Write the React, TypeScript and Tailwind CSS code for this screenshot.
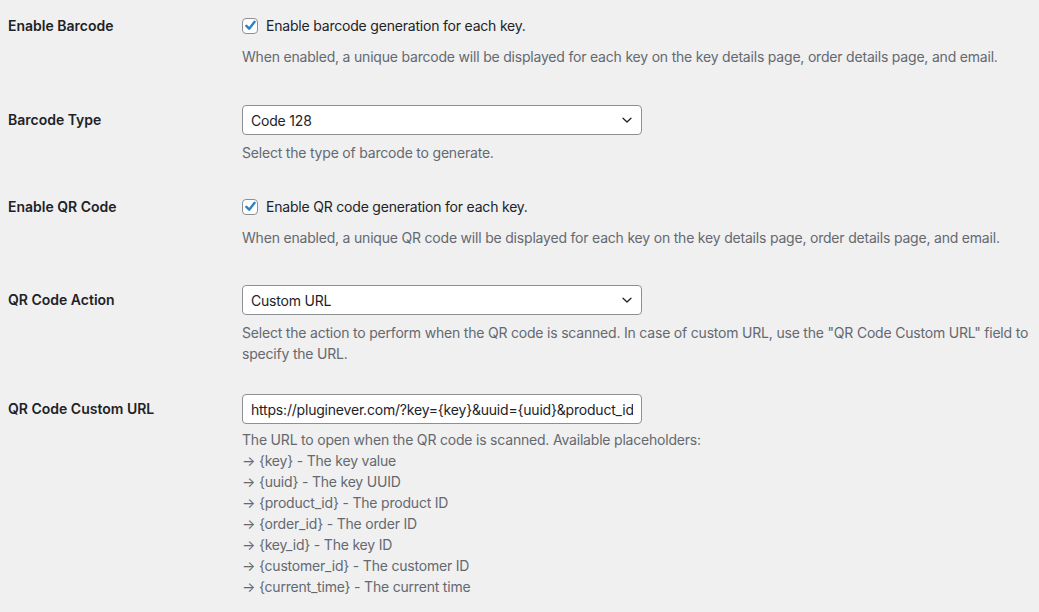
import React from "react";

// WordPress-style settings table for barcode / QR code options

const Chevron: React.FC = () => (
  <svg width="12" height="12" viewBox="0 0 12 12" fill="none" className="shrink-0">
    <path d="M2 4.2 6 8l4-3.8" stroke="#1d2327" strokeWidth="1.3" strokeLinecap="round" strokeLinejoin="round" />
  </svg>
);

const Checkbox: React.FC = () => (
  <span className="w-[16px] h-[16px] shrink-0 rounded-[4px] border border-[#8c8f94] bg-white flex items-center justify-center">
    <svg width="13" height="13" viewBox="0 0 12 12" fill="none">
      <path d="M2.2 6.3 4.8 8.9 9.8 2.6" stroke="#2f7fc6" strokeWidth="2.2" strokeLinecap="round" strokeLinejoin="round" />
    </svg>
  </span>
);

interface RowProps {
  label: string;
  pt: string;
  labelLeading: string;
  children: React.ReactNode;
}

const Row: React.FC<RowProps> = ({ label, pt, labelLeading, children }) => (
  <div className={`flex ${pt}`}>
    <div className={`w-[242px] shrink-0 pl-2 font-semibold text-[#1d2327] ${labelLeading}`}>{label}</div>
    <div className="flex-1 min-w-0 tracking-[-0.2px]">{children}</div>
  </div>
);

const CheckLine: React.FC<{ text: string }> = ({ text }) => (
  <label className="flex items-center gap-2 leading-[21px] text-[#1d2327]">
    <Checkbox />
    <span>{text}</span>
  </label>
);

const Select: React.FC<{ value: string }> = ({ value }) => (
  <div className="w-[400px] h-[30px] rounded-[4px] border border-[#8c8f94] bg-white flex items-center justify-between pl-2 pr-[8px] text-[#1d2327]">
    <span>{value}</span>
    <Chevron />
  </div>
);

const placeholders = [
  ["{key}", "The key value"],
  ["{uuid}", "The key UUID"],
  ["{product_id}", "The product ID"],
  ["{order_id}", "The order ID"],
  ["{key_id}", "The key ID"],
  ["{customer_id}", "The customer ID"],
  ["{current_time}", "The current time"],
];

export default function App() {
  return (
    <div className="min-h-screen bg-[#f0f0f1] text-[14px] font-['Inter','Liberation_Sans',sans-serif] overflow-hidden">
      <Row label="Enable Barcode" pt="pt-[15px]" labelLeading="leading-[21px]">
        <CheckLine text="Enable barcode generation for each key." />
        <p className="mt-[10px] leading-[21px] text-[#646970]">
          When enabled, a unique barcode will be displayed for each key on the key details page, order details page, and email.
        </p>
      </Row>

      <Row label="Barcode Type" pt="pt-[38px]" labelLeading="leading-[30px]">
        <Select value="Code 128" />
        <p className="mt-[7px] leading-[21px] text-[#646970]">Select the type of barcode to generate.</p>
      </Row>

      <Row label="Enable QR Code" pt="pt-[33px]" labelLeading="leading-[21px]">
        <CheckLine text="Enable QR code generation for each key." />
        <p className="mt-[10px] leading-[21px] text-[#646970]">
          When enabled, a unique QR code will be displayed for each key on the key details page, order details page, and email.
        </p>
      </Row>

      <Row label="QR Code Action" pt="pt-[37px]" labelLeading="leading-[30px]">
        <Select value="Custom URL" />
        <p className="mt-[7px] leading-[21px] text-[#646970] whitespace-nowrap">
          Select the action to perform when the QR code is scanned. In case of custom URL, use the "QR Code Custom URL" field to
          <br />
          specify the URL.
        </p>
      </Row>

      <Row label="QR Code Custom URL" pt="pt-[30px]" labelLeading="leading-[30px]">
        <input
          readOnly
          value="https://pluginever.com/?key={key}&uuid={uuid}&product_id={product_id}"
          className="w-[400px] h-[30px] rounded-[4px] border border-[#8c8f94] bg-white px-2 text-[#1d2327] outline-none tracking-[-0.2px]"
        />
        <div className="mt-[5px] leading-[21px] text-[#646970]">
          <p>The URL to open when the QR code is scanned. Available placeholders:</p>
          {placeholders.map(([key, desc]) => (
            <p key={key}>
              → {key} - {desc}
            </p>
          ))}
        </div>
      </Row>
    </div>
  );
}
